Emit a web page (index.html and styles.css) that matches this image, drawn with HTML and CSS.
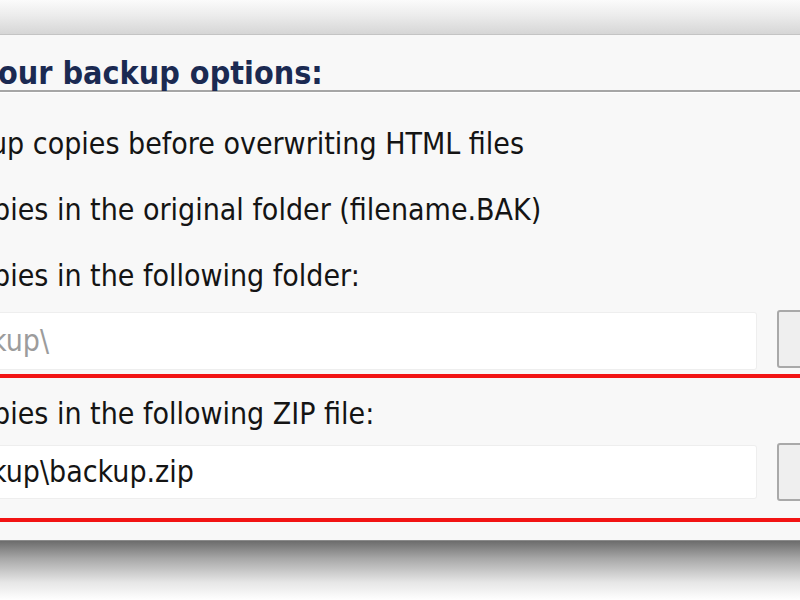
FILE: index.html
```html
<!DOCTYPE html>
<html>
<head>
<meta charset="utf-8">
<link rel="stylesheet" href="styles.css">
</head>
<body>
<div class="screen">
  <div class="titlebar"></div>
  <div class="dialog">
    <div class="heading"><span class="cut">our backup options:</span></div>
    <div class="line line-first"><span class="cut cut-u">up copies before overwriting HTML files</span></div>
    <div class="line"><span class="cut cut-p">pies in the original folder (filename.BAK)</span></div>
    <div class="line"><span class="cut cut-p">pies in the following folder:</span></div>
    <div class="field-row field-row-folder">
      <div class="field disabled"><span class="cut cut-k">kup\</span></div>
      <div class="browse"></div>
    </div>
    <div class="highlight">
      <div class="zip-label"><span class="cut cut-p">pies in the following ZIP file:</span></div>
      <div class="field-row field-row-zip">
        <div class="field"><span class="cut cut-k">kup\backup.zip</span></div>
        <div class="browse"></div>
      </div>
    </div>
  </div>
  <div class="shadow"></div>
</div>
</body>
</html>
```

FILE: styles.css
```css
html, body {
  margin: 0;
  padding: 0;
  background: #ffffff;
  overflow: hidden;
}

.screen {
  width: 800px;
  height: 600px;
  display: flex;
  flex-direction: column;
  overflow: hidden;
  font-family: "DejaVu Sans Condensed", "DejaVu Sans", sans-serif;
  font-size: 30px;
  color: #141414;
}

.titlebar {
  height: 34px;
  flex: none;
  background: linear-gradient(to bottom, #fbfbfb 0%, #ececec 45%, #d6d6d6 100%);
  border-bottom: 1px solid #c4c4c4;
}

.dialog {
  flex: none;
  height: 505px;
  background: #f8f8f8;
  border-bottom: 1px solid #8a8a8a;
  display: flex;
  flex-direction: column;
}

.dialog > * { flex: none; }

.cut {
  display: inline-block;
  white-space: nowrap;
}

.cut-u { margin-left: -10px; }
.cut-p { margin-left: -7px; }
.cut-k { margin-left: -9px; }

.heading {
  height: 57px;
  box-sizing: border-box;
  padding-top: 21px;
  line-height: 34px;
  font-weight: bold;
  font-size: 32px;
  color: #1b2a52;
  border-bottom: 2px solid #a6a6a6;
  box-shadow: 0 1px 0 #ffffff;
}

.heading .cut { margin-left: -2px; }

.line {
  height: 66px;
  line-height: 32px;
  display: flex;
  align-items: center;
}

.line-first { margin-top: 19px; }

.field-row {
  display: flex;
  align-items: flex-start;
  gap: 20px;
  height: 63px;
}

.field-row-folder { height: 65px; }

.field {
  flex: none;
  width: 757px;
  height: 58px;
  margin-top: 2px;
  box-sizing: border-box;
  background: #ffffff;
  border: 1px solid #eeeeee;
  border-left: none;
  border-radius: 0 3px 3px 0;
  display: flex;
  align-items: center;
  line-height: 32px;
}

.field-row-folder .field { margin-top: 3px; }
.field-row-folder .browse { margin-top: 1px; }

.field.disabled { color: #9c9c9c; }

.browse {
  flex: none;
  width: 40px;
  height: 58px;
  box-sizing: border-box;
  background: #efefef;
  border: 2px solid #a9a9a9;
  border-radius: 3px;
}

.highlight {
  margin-left: -20px;
  width: 840px;
  height: 148px;
  box-sizing: border-box;
  border: 4px solid #f21414;
  padding-left: 16px;
}

.zip-label {
  height: 32px;
  line-height: 32px;
  margin-top: 20px;
}

.field-row-zip {
  margin-top: 13px;
}

.field-row-zip .field {
  height: 54px;
}

.shadow {
  flex: 1;
  background: linear-gradient(to bottom, #6c6c6c 0%, #a8a8a8 30%, #e6e6e6 70%, #ffffff 100%);
}
```
